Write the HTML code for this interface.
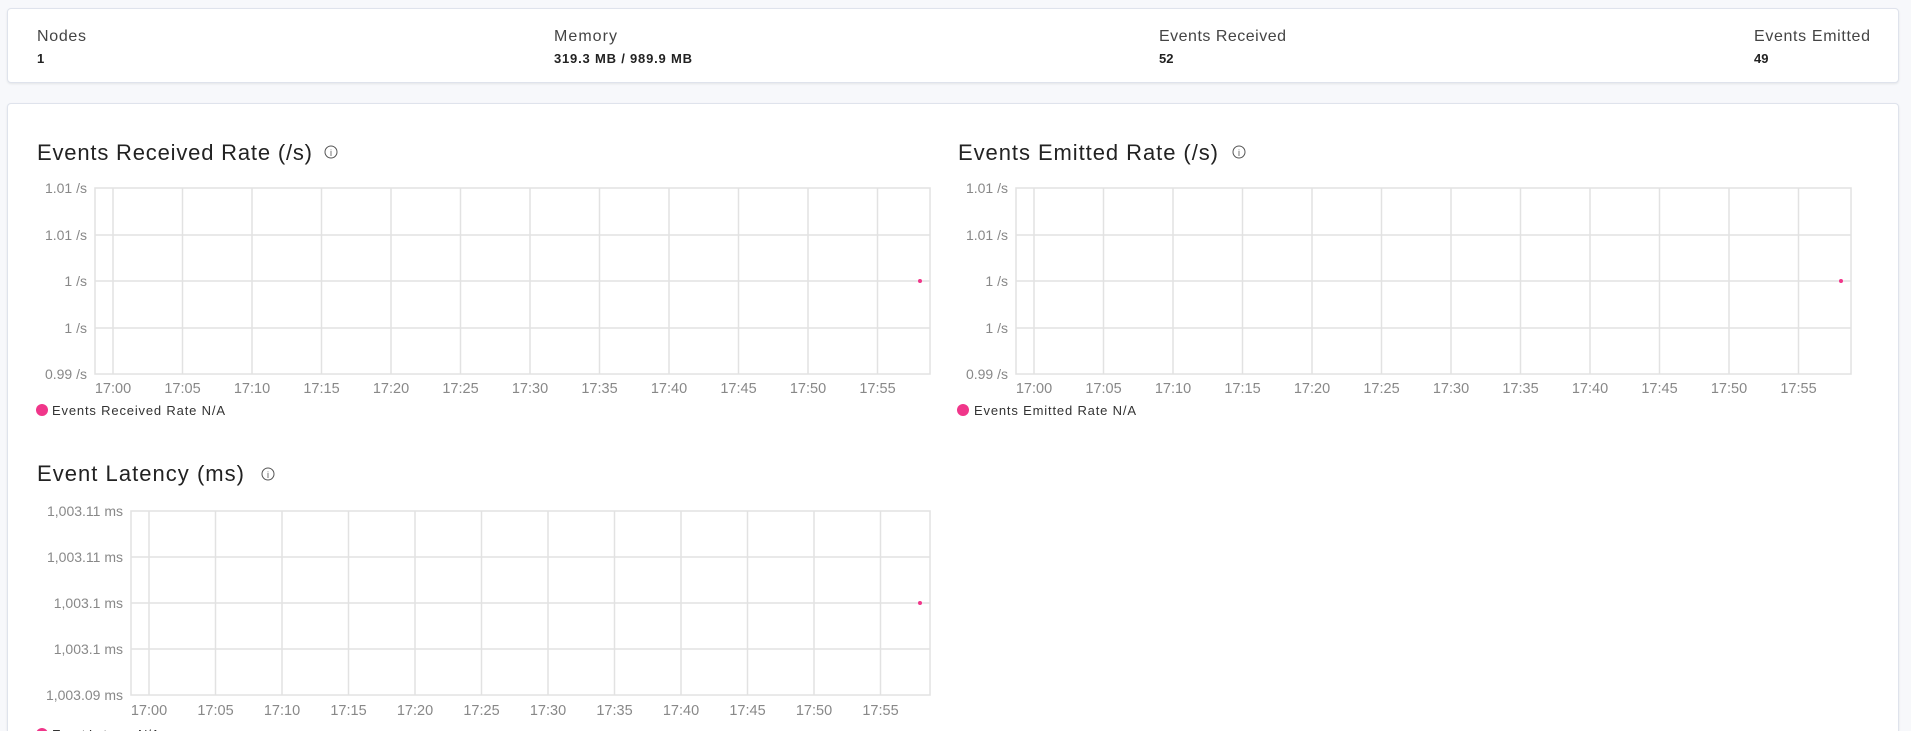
<!DOCTYPE html>
<html><head><meta charset="utf-8"><style>
html,body{margin:0;padding:0;background:#f7f8fb;width:1911px;height:731px;overflow:hidden;font-family:"Liberation Sans",sans-serif;position:relative}
.card{position:absolute;background:#fff;border:1px solid #dfe3ec;border-radius:4px;box-shadow:0 1px 2px rgba(0,0,0,.08);box-sizing:border-box}
svg{position:absolute;left:0;top:0}
</style></head><body>
<div class="card" style="left:7px;top:8px;width:1892px;height:75px"></div>
<div class="card" style="left:7px;top:103px;width:1892px;height:628px;border-bottom:none;border-radius:4px 4px 0 0"></div>
<svg width="1911" height="731" font-family="Liberation Sans, sans-serif">
<g font-size="16" fill="#444">
<text x="37" y="41" textLength="49">Nodes</text><text x="554" y="41" textLength="63">Memory</text><text x="1159" y="41" textLength="127">Events Received</text><text x="1754" y="41" textLength="116">Events Emitted</text></g>
<g font-size="13" font-weight="bold" fill="#222">
<text x="37" y="63">1</text><text x="554" y="63" textLength="138">319.3 MB / 989.9 MB</text><text x="1159" y="63">52</text><text x="1754" y="63">49</text></g>
<g font-size="22" fill="#222">
<text x="37" y="160" textLength="275">Events Received Rate (/s)</text>
<text x="958" y="160" textLength="260">Events Emitted Rate (/s)</text>
<text x="37" y="481" textLength="207">Event Latency (ms)</text></g>
<g fill="none" stroke="#555" stroke-width="1">
<circle cx="331" cy="152" r="6"/><circle cx="1239" cy="152" r="6"/><circle cx="268" cy="474" r="6"/></g>
<g font-size="9" fill="#555" text-anchor="middle"><text x="331" y="156">i</text><text x="1239" y="156">i</text><text x="268" y="478">i</text></g>
<g stroke="#e2e2e2" stroke-width="1.5" fill="none">
<rect x="95" y="188" width="835" height="186"/><path d="M95 235H930M95 281H930M95 328H930"/>
<path d="M113 188V374M182.5 188V374M252 188V374M321.5 188V374M391 188V374M460.5 188V374M530 188V374M599.5 188V374M669 188V374M738.5 188V374M808 188V374M877.5 188V374"/>
<rect x="1016" y="188" width="835" height="186"/><path d="M1016 235H1851M1016 281H1851M1016 328H1851"/>
<path d="M1034 188V374M1103.5 188V374M1173 188V374M1242.5 188V374M1312 188V374M1381.5 188V374M1451 188V374M1520.5 188V374M1590 188V374M1659.5 188V374M1729 188V374M1798.5 188V374"/>
<rect x="131" y="511" width="799" height="184"/><path d="M131 557H930M131 603H930M131 649H930"/>
<path d="M149 511V695M215.5 511V695M282 511V695M348.5 511V695M415 511V695M481.5 511V695M548 511V695M614.5 511V695M681 511V695M747.5 511V695M814 511V695M880.5 511V695"/>
</g>
<g font-size="14" fill="#888" text-anchor="end">
<text x="87" y="193">1.01 /s</text><text x="87" y="240">1.01 /s</text><text x="87" y="286">1 /s</text><text x="87" y="333">1 /s</text><text x="87" y="379">0.99 /s</text>
<text x="1008" y="193">1.01 /s</text><text x="1008" y="240">1.01 /s</text><text x="1008" y="286">1 /s</text><text x="1008" y="333">1 /s</text><text x="1008" y="379">0.99 /s</text>
<text x="123" y="516">1,003.11 ms</text><text x="123" y="562">1,003.11 ms</text><text x="123" y="608">1,003.1 ms</text><text x="123" y="654">1,003.1 ms</text><text x="123" y="700">1,003.09 ms</text>
</g>
<g font-size="14.5" fill="#888" text-anchor="middle">
<text x="113" y="393">17:00</text><text x="182.5" y="393">17:05</text><text x="252" y="393">17:10</text><text x="321.5" y="393">17:15</text><text x="391" y="393">17:20</text><text x="460.5" y="393">17:25</text><text x="530" y="393">17:30</text><text x="599.5" y="393">17:35</text><text x="669" y="393">17:40</text><text x="738.5" y="393">17:45</text><text x="808" y="393">17:50</text><text x="877.5" y="393">17:55</text>
<text x="1034" y="393">17:00</text><text x="1103.5" y="393">17:05</text><text x="1173" y="393">17:10</text><text x="1242.5" y="393">17:15</text><text x="1312" y="393">17:20</text><text x="1381.5" y="393">17:25</text><text x="1451" y="393">17:30</text><text x="1520.5" y="393">17:35</text><text x="1590" y="393">17:40</text><text x="1659.5" y="393">17:45</text><text x="1729" y="393">17:50</text><text x="1798.5" y="393">17:55</text>
<text x="149" y="715">17:00</text><text x="215.5" y="715">17:05</text><text x="282" y="715">17:10</text><text x="348.5" y="715">17:15</text><text x="415" y="715">17:20</text><text x="481.5" y="715">17:25</text><text x="548" y="715">17:30</text><text x="614.5" y="715">17:35</text><text x="681" y="715">17:40</text><text x="747.5" y="715">17:45</text><text x="814" y="715">17:50</text><text x="880.5" y="715">17:55</text>
</g>
<g fill="#f0368a"><circle cx="920" cy="281" r="2"/><circle cx="1841" cy="281" r="2"/><circle cx="920" cy="603" r="2"/>
<circle cx="42" cy="410" r="6"/><circle cx="963" cy="410" r="6"/><circle cx="42" cy="734" r="6"/></g>
<g font-size="13" fill="#333"><text x="52" y="415" textLength="173">Events Received Rate N/A</text><text x="974" y="415" textLength="162">Events Emitted Rate N/A</text><text x="52" y="739">Event Latency N/A</text></g>
</svg>
</body></html>
